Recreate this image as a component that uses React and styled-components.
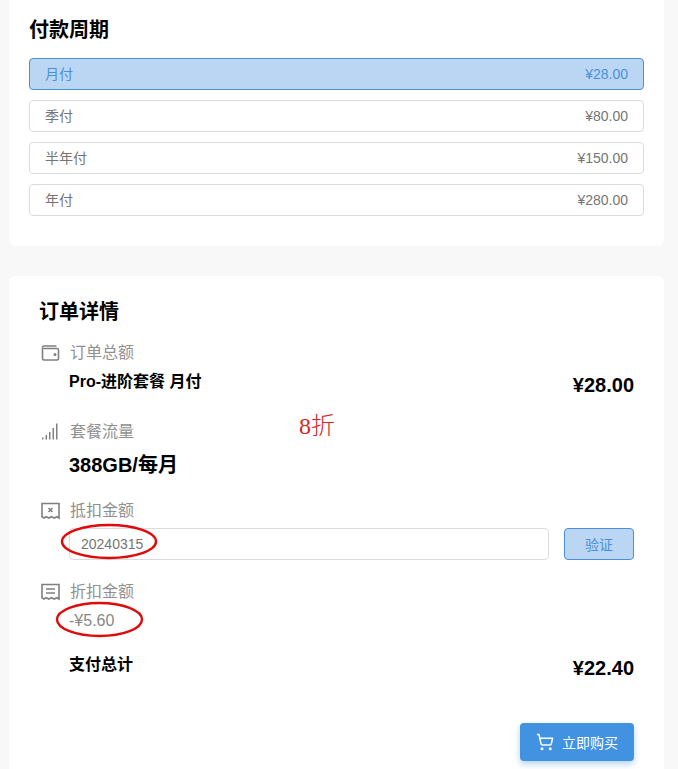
import styled, { createGlobalStyle } from "styled-components"
import { ShoppingCart } from "lucide-react"

const GlobalStyle = createGlobalStyle`
  html, body {
    margin: 0;
    padding: 0;
    background: #f8f8f9;
    overflow: hidden;
  }
  body {
    font-family: "Liberation Sans", "Noto Sans CJK SC", sans-serif;
  }
  * {
    box-sizing: border-box;
  }
`

const Page = styled.div`
  height: 769px;
  overflow: hidden;
  padding: 0 14px 0 9px;
  display: flex;
  flex-direction: column;
  gap: 30px;
`

const Card = styled.section`
  position: relative;
  background: #fff;
  border-radius: ${(p) => (p.$first ? "0 0 6px 6px" : "6px 6px 0 0")};
  padding: ${(p) => (p.$first ? "15px 20px 30px" : "21px 30px 8px")};
  flex: ${(p) => (p.$first ? "none" : "1")};
`

const Title = styled.h2`
  margin: 0;
  font-size: 20px;
  line-height: 30px;
  font-weight: 700;
  color: #000;
`

const Options = styled.div`
  display: flex;
  flex-direction: column;
  gap: 10px;
  margin-top: 13px;
`

const Option = styled.div`
  height: 32px;
  display: flex;
  align-items: center;
  justify-content: space-between;
  padding: 0 15px;
  font-size: 14px;
  border-radius: 4px;
  border: 1px solid ${(p) => (p.$active ? "#4a90d9" : "#dcdcdc")};
  background: ${(p) => (p.$active ? "#bbd6f2" : "#fff")};
  color: ${(p) => (p.$active ? "#4a90d9" : "#757575")};
`

const OptionName = styled.span`
  padding-bottom: 2px;
`

const Section = styled.div`
  margin-top: ${(p) => p.$gap || 0}px;
`

const LabelRow = styled.div`
  display: flex;
  align-items: center;
  height: 24px;
  font-size: 16px;
  color: #909090;
  padding-left: 2px;
  gap: 10px;
`

const LabelText = styled.span`
  padding-bottom: 2px;
`

const Body = styled.div`
  padding-left: 30px;
`

const SplitRow = styled.div`
  display: flex;
  justify-content: space-between;
  align-items: flex-start;
  padding-left: 30px;
  margin-top: ${(p) => p.$top || 0}px;
`

const Strong = styled.div`
  font-size: 16px;
  line-height: 24px;
  font-weight: 700;
  color: #000;
`

const Price = styled.div`
  font-size: 20px;
  line-height: 30px;
  font-weight: 700;
  color: #000;
`

const BigValue = styled.div`
  font-size: 20px;
  line-height: 30px;
  font-weight: 700;
  color: #000;
  margin-top: 7px;
`

const CouponRow = styled.div`
  display: flex;
  gap: 15px;
  padding-left: 30px;
  margin-top: 6px;
`

const Input = styled.input`
  flex: 1;
  min-width: 0;
  height: 32px;
  padding: 0 11px;
  font: inherit;
  font-size: 14px;
  color: #757575;
  background: #fff;
  border: 1px solid #dcdcdc;
  border-radius: 4px;
  outline: none;
`

const VerifyButton = styled.button`
  width: 70px;
  height: 32px;
  font: inherit;
  font-size: 14px;
  color: #4a90d9;
  background: #bbd6f2;
  border: 1px solid #4a90d9;
  border-radius: 4px;
`

const Discount = styled.div`
  font-size: 16px;
  line-height: 24px;
  color: #888;
  margin-top: 6px;
`

const Actions = styled.div`
  display: flex;
  justify-content: flex-end;
  margin-top: 40px;
`

const BuyButton = styled.button`
  width: 114px;
  height: 38px;
  display: flex;
  align-items: center;
  justify-content: center;
  gap: 8px;
  font: inherit;
  font-size: 14px;
  color: #fff;
  background: #4192e0;
  border: none;
  border-radius: 4px;
  box-shadow: 0 3px 6px rgba(65, 146, 224, 0.4);
`

const Note = styled.span`
  position: absolute;
  left: 290px;
  top: 135px;
  font-family: "Liberation Serif", "Noto Sans CJK SC", serif;
  font-size: 24px;
  line-height: 30px;
  font-weight: 300;
  color: #d92626;
`

const Ring = styled.svg`
  position: absolute;
  left: ${(p) => p.$x}px;
  top: ${(p) => p.$y}px;
  overflow: visible;
  pointer-events: none;
`

const Icon = styled.svg`
  width: 19px;
  height: 19px;
  flex: none;
  color: #808080;
`

const WalletIcon = () => (
  <Icon viewBox="0 0 19 19" fill="none" stroke="currentColor" strokeWidth="1.6">
    <path d="M1.500 4.500V15.500a1.500 1.500 0 0 0 1.500 1.500h13a1.500 1.500 0 0 0 1.500-1.500V7a1.500 1.500 0 0 0-1.500-1.500H2.500" />
    <path d="M1.500 4.500a1.500 1.500 0 0 1 1.500-1.500h12.500" />
    <circle cx="14" cy="11.500" r="0.700" fill="currentColor" />
  </Icon>
)

const SignalIcon = () => (
  <Icon viewBox="0 0 19 19" fill="currentColor">
    <rect x="1" y="15.500" width="1.500" height="2" />
    <rect x="4.500" y="13" width="1.500" height="4.500" />
    <rect x="8" y="10" width="1.500" height="7.500" />
    <rect x="11.500" y="6" width="1.500" height="11.500" />
    <rect x="15" y="1.500" width="1.500" height="16" />
  </Icon>
)

const ReceiptBase = ({ children }) => (
  <Icon viewBox="0 0 19 19" fill="none" stroke="currentColor" strokeWidth="1.6">
    <path d="M1 2.500h17v14.500l-2.100-1.300-2.700 1.300-2.700-1.300-2.700 1.300-2.700-1.300-2 1.300-2.100-1.300z" />
    {children}
  </Icon>
)

const RINGS = [
  { x: 52, y: 248, w: 96, h: 35 },
  { x: 47, y: 326, w: 87, h: 35 },
]

const PERIODS = [
  { name: "月付", price: "¥28.00", active: true },
  { name: "季付", price: "¥80.00" },
  { name: "半年付", price: "¥150.00" },
  { name: "年付", price: "¥280.00" },
]

export default function App() {
  return (
    <>
      <GlobalStyle />
      <Page>
        <Card $first>
          <Title>付款周期</Title>
          <Options>
            {PERIODS.map((p) => (
              <Option key={p.name} $active={p.active}>
                <OptionName>{p.name}</OptionName>
                <span>{p.price}</span>
              </Option>
            ))}
          </Options>
        </Card>

        <Card>
          <Title>订单详情</Title>

          <Section $gap={13}>
            <LabelRow>
              <WalletIcon />
              <LabelText>订单总额</LabelText>
            </LabelRow>
            <SplitRow $top={6}>
              <Strong>Pro-进阶套餐 月付</Strong>
              <Price>¥28.00</Price>
            </SplitRow>
          </Section>

          <Section $gap={19}>
            <LabelRow>
              <SignalIcon />
              <LabelText>套餐流量</LabelText>
            </LabelRow>
            <Body>
              <BigValue>388GB/每月</BigValue>
            </Body>
          </Section>

          <Section $gap={18}>
            <LabelRow>
              <ReceiptBase>
                <path d="M7.500 7l4 4M11.500 7l-4 4" />
              </ReceiptBase>
              <LabelText>抵扣金额</LabelText>
            </LabelRow>
            <CouponRow>
              <Input defaultValue="20240315" />
              <VerifyButton>验证</VerifyButton>
            </CouponRow>
          </Section>

          <Section $gap={19}>
            <LabelRow>
              <ReceiptBase>
                <path d="M5 7h9M5 11h9" />
              </ReceiptBase>
              <LabelText>折扣金额</LabelText>
            </LabelRow>
            <Body>
              <Discount>-¥5.60</Discount>
            </Body>
          </Section>

          <Section $gap={20}>
            <SplitRow>
              <Strong>支付总计</Strong>
              <Price>¥22.40</Price>
            </SplitRow>
          </Section>

          <Actions>
            <BuyButton>
              <ShoppingCart size={18} strokeWidth={2} />
              立即购买
            </BuyButton>
          </Actions>

          <Note>8折</Note>
          {RINGS.map((r) => (
            <Ring key={r.x} $x={r.x} $y={r.y} width={r.w} height={r.h}>
              <ellipse
                cx={r.w / 2}
                cy={r.h / 2}
                rx={r.w / 2 - 1}
                ry={r.h / 2 - 1}
                fill="none"
                stroke="#e00a0a"
                strokeWidth="2.4"
              />
            </Ring>
          ))}
        </Card>
      </Page>
    </>
  )
}
